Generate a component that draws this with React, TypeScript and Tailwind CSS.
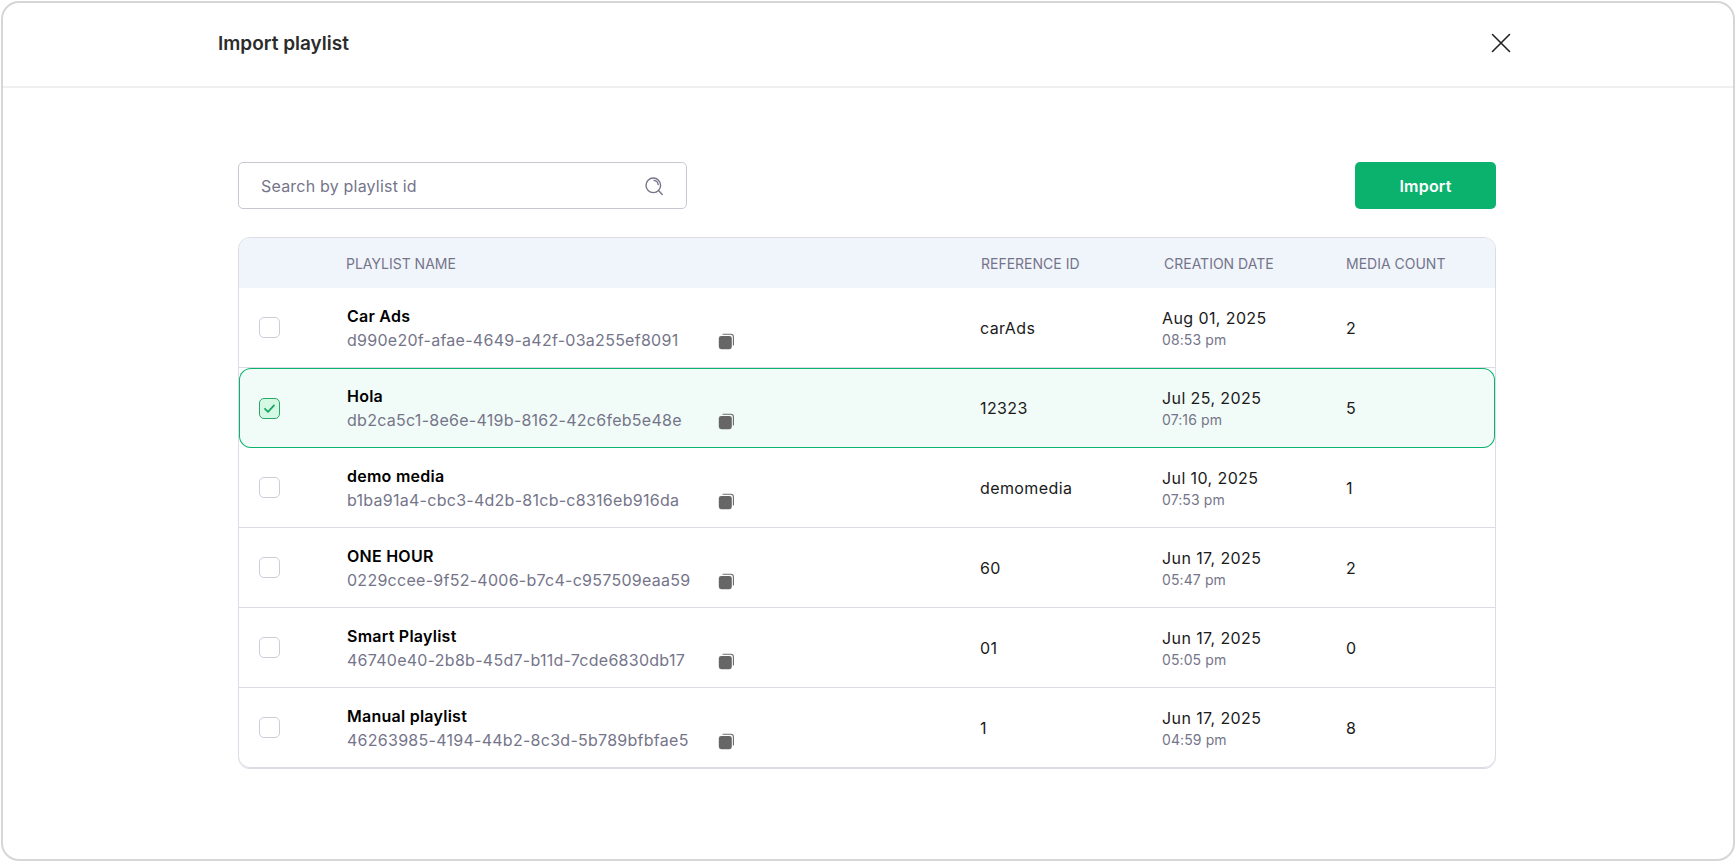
import React from 'react';

interface Playlist {
  name: string;
  id: string;
  refId: string;
  date: string;
  time: string;
  count: number;
  selected?: boolean;
}

const playlists: Playlist[] = [
  { name: 'Car Ads', id: 'd990e20f-afae-4649-a42f-03a255ef8091', refId: 'carAds', date: 'Aug 01, 2025', time: '08:53 pm', count: 2 },
  { name: 'Hola', id: 'db2ca5c1-8e6e-419b-8162-42c6feb5e48e', refId: '12323', date: 'Jul 25, 2025', time: '07:16 pm', count: 5, selected: true },
  { name: 'demo media', id: 'b1ba91a4-cbc3-4d2b-81cb-c8316eb916da', refId: 'demomedia', date: 'Jul 10, 2025', time: '07:53 pm', count: 1 },
  { name: 'ONE HOUR', id: '0229ccee-9f52-4006-b7c4-c957509eaa59', refId: '60', date: 'Jun 17, 2025', time: '05:47 pm', count: 2 },
  { name: 'Smart Playlist', id: '46740e40-2b8b-45d7-b11d-7cde6830db17', refId: '01', date: 'Jun 17, 2025', time: '05:05 pm', count: 0 },
  { name: 'Manual playlist', id: '46263985-4194-44b2-8c3d-5b789bfbfae5', refId: '1', date: 'Jun 17, 2025', time: '04:59 pm', count: 8 },
];

const CopyIcon = () => (
  <svg className="mt-[3px]" width="17" height="17" viewBox="0 0 17 17" fill="none">
    <path d="M5 1.2h7.8a2.6 2.6 0 0 1 2.6 2.6v8.2" stroke="#6b6b6b" strokeWidth="1.1" strokeLinecap="round" />
    <rect x="0.8" y="3" width="13" height="13.2" rx="2.4" fill="#666666" />
  </svg>
);

const SearchIcon = () => (
  <svg width="20" height="20" viewBox="0 0 20 20" fill="none" stroke="#75758a" strokeWidth="1.4" strokeLinecap="round">
    <circle cx="9.3" cy="9.3" r="7.3" />
    <path d="M10 4.4a4.9 4.9 0 0 1 4.2 4.2" />
    <path d="M14.8 14.8l3.4 3.6" />
  </svg>
);

const Row = ({ p }: { p: Playlist }) => (
  <div
    className={
      p.selected
        ? 'flex h-[80px] items-center rounded-xl bg-[#f1fbf7] ring-1 ring-inset ring-[#0bb26e]'
        : 'flex h-[80px] items-center border-b border-[#dcdce6] last:h-[79px] last:border-b-0'
    }
  >
    <div className="w-[108px] shrink-0 pl-[20px]">
      {p.selected ? (
        <div className="flex h-[21px] w-[21px] items-center justify-center rounded-[5px] border-[1.5px] border-[#2aa865] bg-[#d5f8e5]">
          <svg width="13" height="13" viewBox="0 0 13 13" fill="none" stroke="#17a865" strokeWidth="1.8" strokeLinecap="round" strokeLinejoin="round">
            <path d="M2 6.8l3 3 6-6.4" />
          </svg>
        </div>
      ) : (
        <div className="h-[21px] w-[21px] rounded-[5px] border border-[#cdcdd9] bg-white" />
      )}
    </div>
    <div className="w-[633px] shrink-0">
      <div className="text-[16px] leading-[24px] font-semibold tracking-[0.25px] text-black">{p.name}</div>
      <div className="flex items-center leading-[24px]">
        <span className="w-[371px] text-[16px] tracking-[0.27px] text-[#75758a]">{p.id}</span>
        <CopyIcon />
      </div>
    </div>
    <div className="w-[182px] shrink-0 text-[16px] tracking-[0.4px] text-[#1a1a1a]">{p.refId}</div>
    <div className="w-[184px] shrink-0">
      <div className="text-[16px] leading-[24px] tracking-[0.4px] text-[#1a1a1a]">{p.date}</div>
      <div className="text-[14px] leading-[20px] tracking-[0.1px] text-[#75758a]">{p.time}</div>
    </div>
    <div className="text-[16px] text-[#1a1a1a]">{p.count}</div>
  </div>
);

export default function App() {
  return (
    <div className="h-[862px] w-full overflow-hidden bg-white p-px font-['Inter',sans-serif]">
      <div className="flex h-full flex-col rounded-[18px] border-2 border-[#d6d6d6]">
        <div className="flex h-[85px] shrink-0 items-center justify-between border-b-2 border-[#efefef] pr-[222px] pl-[215px]">
          <h1 className="text-[19px] font-semibold text-[#2b2b2b]">Import playlist</h1>
          <svg className="mb-[4px]" width="20" height="20" viewBox="0 0 20 20" fill="none" stroke="#222222" strokeWidth="1.6" strokeLinecap="round">
            <path d="M1.5 1.5l17 17M18.5 1.5l-17 17" />
          </svg>
        </div>
        <div className="pt-[74px] pr-[237px] pl-[235px]">
          <div className="flex items-center justify-between">
            <div className="flex h-[47px] w-[449px] items-center justify-between rounded-[5px] border border-[#c8c8d4] pr-[22px] pl-[22px]">
              <span className="text-[16px] tracking-[0.2px] text-[#75758a]">Search by playlist id</span>
              <SearchIcon />
            </div>
            <button className="h-[47px] w-[141px] rounded-[5px] bg-[#0bb26e] text-[16px] font-semibold tracking-[0.2px] text-white">Import</button>
          </div>
          <div className="mt-[28px] rounded-xl border border-[#dcdce6] shadow-[0_1px_0_#dcdce6]">
            <div className="flex h-[50px] items-center rounded-t-xl bg-[#f0f4fb] text-[14px] text-[#75758a]">
              <div className="w-[107px] shrink-0" />
              <div className="w-[635px] shrink-0">PLAYLIST NAME</div>
              <div className="w-[183px] shrink-0">REFERENCE ID</div>
              <div className="w-[182px] shrink-0">CREATION DATE</div>
              <div>MEDIA COUNT</div>
            </div>
            {playlists.map(p => (
              <Row key={p.id} p={p} />
            ))}
          </div>
        </div>
      </div>
    </div>
  );
}
